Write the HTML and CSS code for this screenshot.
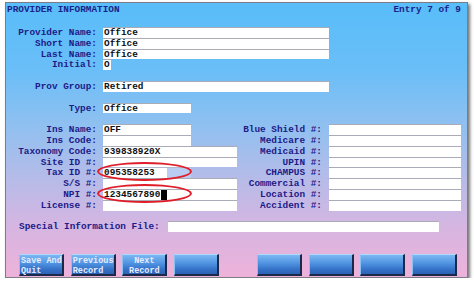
FILE: index.html
```html
<!DOCTYPE html>
<html>
<head>
<meta charset="utf-8">
<link rel="stylesheet" href="styles.css">
</head>
<body>
<div class="panel">
  <div class="header">
    <span>PROVIDER INFORMATION</span>
    <span>Entry 7 of 9</span>
  </div>
  <div class="row"><span class="lbl">Provider Name:</span><span class="fld w-long">Office</span></div>
  <div class="row"><span class="lbl">Short Name:</span><span class="fld w-long">Office</span></div>
  <div class="row"><span class="lbl">Last Name:</span><span class="fld w-long">Office</span></div>
  <div class="row"><span class="lbl">Initial:</span><span class="fld w-init">O</span></div>
  <div class="row"></div>
  <div class="row"><span class="lbl">Prov Group:</span><span class="fld w-long">Retired</span></div>
  <div class="row"></div>
  <div class="row"><span class="lbl">Type:</span><span class="fld w-short">Office</span></div>
  <div class="row"></div>
  <div class="cols">
    <div class="col">
      <div class="row"><span class="lbl">Ins Name:</span><span class="fld w-short">OFF</span></div>
      <div class="row"><span class="lbl">Ins Code:</span><span class="fld w-short"></span></div>
      <div class="row"><span class="lbl">Taxonomy Code:</span><span class="fld w-mid">939838920X</span></div>
      <div class="row"><span class="lbl">Site ID #:</span><span class="fld w-mid"></span></div>
      <div class="row"><span class="lbl">Tax ID #:</span><span class="fld w-short tax">095358253</span></div>
      <div class="row"><span class="lbl">S/S #:</span><span class="fld w-mid"></span></div>
      <div class="row"><span class="lbl">NPI #:</span><span class="fld w-mid">1234567890<span class="cursor"></span></span></div>
      <div class="row"><span class="lbl">License #:</span><span class="fld w-mid"></span></div>
    </div>
    <div class="col right">
      <div class="row"><span class="lbl">Blue Shield #:</span><span class="fld w-right"></span></div>
      <div class="row"><span class="lbl">Medicare #:</span><span class="fld w-right"></span></div>
      <div class="row"><span class="lbl">Medicaid #:</span><span class="fld w-right"></span></div>
      <div class="row"><span class="lbl">UPIN #:</span><span class="fld w-right"></span></div>
      <div class="row"><span class="lbl">CHAMPUS #:</span><span class="fld w-right"></span></div>
      <div class="row"><span class="lbl">Commercial #:</span><span class="fld w-right"></span></div>
      <div class="row"><span class="lbl">Location #:</span><span class="fld w-right"></span></div>
      <div class="row"><span class="lbl">Accident #:</span><span class="fld w-right"></span></div>
    </div>
  </div>
  <div class="row"></div>
  <div class="row special"><span class="lbl">Special Information File:</span><span class="fld w-special"></span></div>
  <div class="buttons">
    <div class="group">
      <div class="btn">Save And<br>Quit</div>
      <div class="btn">Previous<br>Record</div>
      <div class="btn center">Next<br>Record</div>
      <div class="btn"></div>
    </div>
    <div class="group">
      <div class="btn"></div>
      <div class="btn"></div>
      <div class="btn"></div>
      <div class="btn"></div>
    </div>
  </div>
  <div class="oval oval-tax"></div>
  <div class="oval oval-npi"></div>
</div>
</body>
</html>
```

FILE: styles.css
```css
html, body {
  margin: 0;
  padding: 0;
  background: #ffffff;
}
body {
  font-family: "Liberation Mono", "Courier New", monospace;
  font-weight: bold;
  font-size: 9.4px;
  line-height: 10px;
}
.panel {
  position: relative;
  box-sizing: border-box;
  width: 463px;
  height: 276px;
  margin: 2px 0 0 5px;
  border: 1px solid #7c7c84;
  box-shadow: 2px 2px 3px rgba(0, 0, 0, 0.55);
  background: linear-gradient(to bottom, #58bdf9 0%, #6bbef7 25%, #90c0f0 45%, #b2bce9 62%, #d3b6e2 80%, #eeb2da 100%);
  display: flex;
  flex-direction: column;
}
.header {
  height: 24px;
  display: flex;
  justify-content: space-between;
  padding: 2px 6px 0 1px;
  box-sizing: border-box;
  color: #1a2488;
}
.row {
  height: 10.8px;
  display: flex;
  align-items: stretch;
}
.lbl {
  width: 91px;
  text-align: right;
  color: #201a88;
  line-height: 11px;
  flex: none;
}
.fld {
  margin-left: 6px;
  background: #ffffff;
  border-top: 1px solid #a9abb6;
  box-sizing: border-box;
  color: #101010;
  padding-left: 1px;
  line-height: 9.5px;
  white-space: nowrap;
  flex: none;
  display: flex;
  align-items: stretch;
}
.w-long { width: 226px; }
.w-init { width: 8px; }
.w-short { width: 88px; }
.w-mid { width: 134px; }
.w-right { width: 132px; }
.w-special { width: 271px; }
.tax {
  background: linear-gradient(to right, #ffffff 0, #ffffff 64px, #b9cdf2 64px);
  border-top-color: #b4b8cc;
}
.cursor {
  display: inline-block;
  width: 6px;
  background: #000000;
  margin-left: 1px;
}
.cols {
  display: flex;
}
.col {
  display: flex;
  flex-direction: column;
  width: 231px;
}
.col.right {
  width: auto;
}
.col.right .lbl {
  width: 85px;
}
.col.right .fld {
  margin-left: 7px;
}
.special {
  padding-left: 13px;
}
.special .lbl {
  text-align: left;
  width: 149px;
}
.special .fld {
  margin-left: 0;
}
.buttons {
  margin-top: auto;
  display: flex;
  justify-content: space-between;
  padding: 0 10px 1px 13px;
}
.group {
  display: flex;
  gap: 6.7px;
}
.btn {
  box-sizing: border-box;
  width: 45px;
  height: 22px;
  background: linear-gradient(to bottom, #7ab8f2 0%, #4f92e0 45%, #3572c8 75%, #2b62b6 100%);
  border-top: 1px solid #b4d8fa;
  border-left: 1px solid #8cc0f0;
  border-right: 2px solid #1c2848;
  border-bottom: 2px solid #1c2848;
  color: #e6ecff;
  font-size: 8.5px;
  padding: 2px 0 0 1px;
  line-height: 9.5px;
  white-space: nowrap;
}
.btn.center {
  text-align: center;
  padding-left: 0;
}
.oval {
  position: absolute;
  left: 91px;
  width: 95px;
  height: 19px;
  box-sizing: border-box;
  border: 2px solid #e01e2a;
  border-radius: 50%;
}
.oval-tax { top: 159px; }
.oval-npi { top: 181px; }
```
